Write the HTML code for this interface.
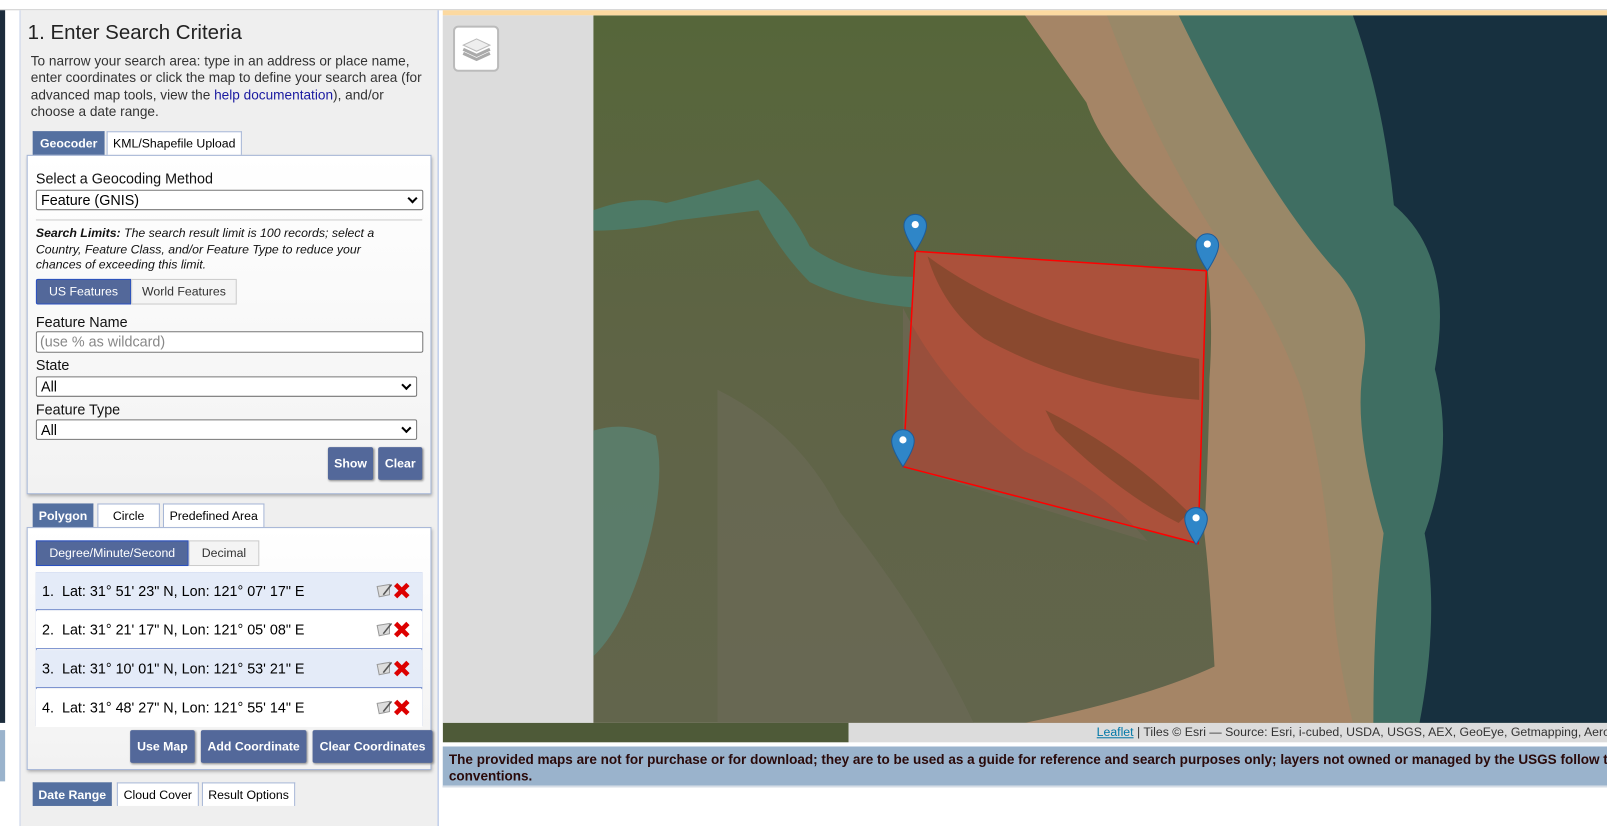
<!DOCTYPE html>
<html><head><meta charset="utf-8"><style>
*{box-sizing:border-box;margin:0;padding:0}
body{width:1607px;height:806px;overflow:hidden;background:#fff;font-family:"Liberation Sans",Arial,sans-serif;position:relative}
#w{position:absolute;left:0;top:0;width:1568px;height:786px;transform:scale(1.0249,1.0254);transform-origin:0 0}
.a{position:absolute}
.tab{position:absolute;height:23px;border:1px solid #a6b6d6;border-bottom:none;background:#fff;font-size:12px;text-align:center;line-height:22px;color:#000}
.tab.on{background:#5470a0;color:#fff;font-weight:bold;border-color:#5470a0}
.btn{position:absolute;background:#53689a;color:#fff;font-weight:bold;font-size:12px;text-align:center;border-radius:2px;box-shadow:1px 1px 2px #888;line-height:32px;height:32px}
.lbl{position:absolute;font-size:14px;color:#111}
.sel{position:absolute;height:20px;border:1px solid #777;background:#fff;border-radius:2px;font-size:14px;line-height:18px;padding-left:4px}
.sel:after{content:"";position:absolute;right:6px;top:4px;width:5px;height:5px;border-right:2px solid #000;border-bottom:2px solid #000;transform:rotate(45deg)}
.row{position:absolute;left:35px;width:377px;height:37px;border-bottom:1px solid #7b93cf;font-size:14px;line-height:36px;padding-left:6px}
.ic{position:absolute;right:8px;top:8px;width:38px;height:20px}
</style></head><body><div id="w">
<div class="a" style="left:0;top:9px;width:1568px;height:1px;background:#ccc"></div>
<div class="a" style="left:0;top:10px;width:5px;height:695px;background:#1c2c3c"></div>
<div class="a" style="left:0;top:712px;width:5px;height:50px;background:#9ab3cc"></div>
<div class="a" style="left:19px;top:10px;width:409px;height:796px;background:#efefef;border-left:1px solid #c7d2ea;border-right:1px solid #a9bce4"></div>
<div class="a" style="left:27px;top:21px;font-size:20px;color:#222">1. Enter Search Criteria</div>
<div class="a" style="left:30px;top:52px;width:392px;font-size:13.3px;line-height:16.3px;color:#333">To narrow your search area: type in an address or place name, enter coordinates or click the map to define your search area (for advanced map tools, view the <span style="color:#1a1aa0">help documentation</span>), and/or<br>choose a date range.</div>
<div class="tab on" style="left:32px;top:128px;width:70px">Geocoder</div>
<div class="tab" style="left:104px;top:128px;width:132px">KML/Shapefile Upload</div>
<div class="a" style="left:26px;top:151px;width:395px;height:331px;border:1px solid #a6b6d6;box-shadow:1px 2px 3px #aaa;background:linear-gradient(#fff,#f2f2f2)"></div>
<div class="lbl" style="left:35px;top:166px">Select a Geocoding Method</div>
<div class="sel" style="left:35px;top:185px;width:378px">Feature (GNIS)</div>
<div class="a" style="left:35px;top:214px;width:377px;height:1px;background:#ccc"></div>
<div class="a" style="left:35px;top:220px;width:370px;font-size:12px;line-height:15.5px;font-style:italic;color:#111"><b>Search Limits:</b> The search result limit is 100 records; select a<br>Country, Feature Class, and/or Feature Type to reduce your<br>chances of exceeding this limit.</div>
<div class="a" style="left:35px;top:272px;width:93px;height:25px;background:#53689a;border:1px solid #2a50c0;color:#fff;font-size:12px;text-align:center;line-height:23px;border-radius:2px 0 0 2px">US Features</div>
<div class="a" style="left:128px;top:272px;width:103px;height:25px;background:#f4f4f4;border:1px solid #ccc;color:#333;font-size:12px;text-align:center;line-height:23px">World Features</div>
<div class="lbl" style="left:35px;top:306px">Feature Name</div>
<div class="a" style="left:35px;top:323px;width:378px;height:21px;border:1px solid #777;background:#fff;border-radius:2px;font-size:14px;color:#888;padding-left:3px;line-height:19px">(use % as wildcard)</div>
<div class="lbl" style="left:35px;top:348px">State</div>
<div class="sel" style="left:35px;top:367px;width:372px">All</div>
<div class="lbl" style="left:35px;top:391px">Feature Type</div>
<div class="sel" style="left:35px;top:409px;width:372px">All</div>
<div class="btn" style="left:320px;top:436px;width:44px">Show</div>
<div class="btn" style="left:369px;top:436px;width:43px">Clear</div>
<div class="tab on" style="left:32px;top:491px;width:59px">Polygon</div>
<div class="tab" style="left:95px;top:491px;width:61px">Circle</div>
<div class="tab" style="left:159px;top:491px;width:99px">Predefined Area</div>
<div class="a" style="left:26px;top:514px;width:395px;height:237px;border:1px solid #a6b6d6;box-shadow:1px 2px 3px #aaa;background:linear-gradient(#fff,#f2f2f2)"></div>
<div class="a" style="left:35px;top:527px;width:149px;height:25px;background:#53689a;border:1px solid #2a50c0;color:#fff;font-size:12px;text-align:center;line-height:23px">Degree/Minute/Second</div>
<div class="a" style="left:184px;top:527px;width:69px;height:25px;background:#f4f4f4;border:1px solid #ccc;color:#333;font-size:12px;text-align:center;line-height:23px">Decimal</div>
<div class="a" style="left:35px;top:558px;width:377px;height:150px;border:1px solid #7b93cf"></div>
<div class="row" style="top:558px;background:#e4ebf8">1.&nbsp; Lat: 31° 51' 23" N, Lon: 121° 07' 17" E<svg class="ic"><path d="M2 6 L14 4 L14 14 L4 16Z" fill="#ddd" stroke="#999"/><path d="M8 14 L16 4" stroke="#555" stroke-width="1.5"/><path d="M20 4 L32 16 M32 4 L20 16" stroke="#d00" stroke-width="4.5"/></svg></div>
<div class="row" style="top:596px;background:#fff">2.&nbsp; Lat: 31° 21' 17" N, Lon: 121° 05' 08" E<svg class="ic"><path d="M2 6 L14 4 L14 14 L4 16Z" fill="#ddd" stroke="#999"/><path d="M8 14 L16 4" stroke="#555" stroke-width="1.5"/><path d="M20 4 L32 16 M32 4 L20 16" stroke="#d00" stroke-width="4.5"/></svg></div>
<div class="row" style="top:634px;background:#e4ebf8">3.&nbsp; Lat: 31° 10' 01" N, Lon: 121° 53' 21" E<svg class="ic"><path d="M2 6 L14 4 L14 14 L4 16Z" fill="#ddd" stroke="#999"/><path d="M8 14 L16 4" stroke="#555" stroke-width="1.5"/><path d="M20 4 L32 16 M32 4 L20 16" stroke="#d00" stroke-width="4.5"/></svg></div>
<div class="row" style="top:672px;background:#fff;border-bottom:none">4.&nbsp; Lat: 31° 48' 27" N, Lon: 121° 55' 14" E<svg class="ic"><path d="M2 6 L14 4 L14 14 L4 16Z" fill="#ddd" stroke="#999"/><path d="M8 14 L16 4" stroke="#555" stroke-width="1.5"/><path d="M20 4 L32 16 M32 4 L20 16" stroke="#d00" stroke-width="4.5"/></svg></div>
<div class="btn" style="left:127px;top:712px;width:63px">Use Map</div>
<div class="btn" style="left:196px;top:712px;width:103px">Add Coordinate</div>
<div class="btn" style="left:305px;top:712px;width:117px">Clear Coordinates</div>
<div class="tab on" style="left:32px;top:763px;width:77px">Date Range</div>
<div class="tab" style="left:114px;top:763px;width:80px">Cloud Cover</div>
<div class="tab" style="left:197px;top:763px;width:91px">Result Options</div>

<div class="a" style="left:432px;top:10px;width:1136px;height:5px;background:#fcd9a0"></div>
<div class="a" style="left:432px;top:15px;width:147px;height:690px;background:#dcdcdc"></div>
<svg class="a" style="left:432px;top:15px" width="1136" height="709" viewBox="432 15 1136 709">
<defs>
<linearGradient id="land" x1="0" x2="0" y1="0" y2="1"><stop offset="0" stop-color="#56663a"/><stop offset=".5" stop-color="#5f6446"/><stop offset="1" stop-color="#62654c"/></linearGradient>
</defs>
<rect x="579" y="15" width="989" height="690" fill="url(#land)"/>
<rect x="432" y="705" width="396" height="19" fill="#4e5a38"/>
<path d="M700 380 Q780 420 820 500 Q900 600 950 705 L700 705Z" fill="#6c6a58" opacity=".6"/>
<path d="M1000 15 L1568 15 L1568 705 L1000 705 Q1120 680 1185 650 Q1180 560 1175 520 Q1180 420 1180 370 Q1185 300 1175 240 Q1080 160 1060 100 Z" fill="#a58566"/>
<path d="M1080 15 L1568 15 L1568 705 L1320 705 Q1300 620 1300 560 Q1290 450 1270 380 Q1240 300 1200 250 Q1130 150 1080 15Z" fill="#8f8a6a" opacity=".55"/>
<path d="M1150 15 L1568 15 L1568 705 L1340 705 Q1340 600 1350 520 Q1320 420 1330 360 Q1340 300 1300 260 Q1230 180 1150 15Z" fill="#3f6e62"/>
<path d="M1320 15 L1568 15 L1568 705 L1385 705 Q1405 600 1390 520 Q1420 440 1400 360 Q1420 250 1360 200 Q1350 100 1320 15Z" fill="#17303f"/>
<path d="M579 205 Q620 190 650 198 Q700 185 740 175 Q770 200 790 240 Q830 270 893 270 L893 300 Q830 295 790 275 Q760 245 740 205 Q700 210 660 215 Q620 225 579 225Z" fill="#4d7a66"/>
<path d="M579 420 Q610 410 640 425 Q650 470 630 540 Q610 610 579 640Z" fill="#5a8070" opacity=".85"/>
<path d="M893 245 L1177 264 L1169 530 L881 455Z" fill="#8f6a4e"/>
<path d="M905 250 Q1000 320 1170 350 L1170 390 Q1050 380 960 330 Q920 300 905 250Z" fill="#4c5a36"/>
<path d="M1020 400 Q1100 440 1160 500 L1150 510 Q1090 480 1030 420Z" fill="#4c5a36"/>
<path d="M881 300 Q920 380 1000 440 Q1080 480 1120 528 L881 455Z" fill="#6a6650"/>
<path d="M893 245 L1177 264 L1169 530 L881 455Z" fill="#c83828" fill-opacity=".5" stroke="#f00" stroke-width="1.5"/>
<g fill="#2f86c8" stroke="#1c5c9a" stroke-width="1">
<path d="M893 245 C882 228 882 222 882 220 A11 11 0 0 1 904 220 C904 222 904 228 893 245Z"/>
<path d="M1178 264 C1167 247 1167 241 1167 239 A11 11 0 0 1 1189 239 C1189 241 1189 247 1178 264Z"/>
<path d="M881 455 C870 438 870 432 870 430 A11 11 0 0 1 892 430 C892 432 892 438 881 455Z"/>
<path d="M1167 531 C1156 514 1156 508 1156 506 A11 11 0 0 1 1178 506 C1178 508 1178 514 1167 531Z"/>
</g>
<g fill="#fff"><circle cx="893" cy="219" r="3.5"/><circle cx="1178" cy="238" r="3.5"/><circle cx="881" cy="429" r="3.5"/><circle cx="1167" cy="505" r="3.5"/></g>
<rect x="828" y="705" width="740" height="19" fill="#dcdcdc"/>
</svg>
<div class="a" style="left:442px;top:25px;width:45px;height:45px;background:#fff;border:2px solid #bbb;border-radius:5px"></div>
<svg class="a" style="left:450px;top:34px" width="30" height="28"><path d="M15 16 L28 10 L15 4 L2 10Z" fill="#eee" stroke="#bbb"/><path d="M2 14 L15 20 L28 14" fill="none" stroke="#aaa" stroke-width="3"/><path d="M2 18 L15 24 L28 18" fill="none" stroke="#aaa" stroke-width="3"/></svg>
<div class="a" style="left:1070px;top:707px;font-size:12px;color:#333;white-space:nowrap;width:498px;overflow:hidden"><span style="color:#0078a8;text-decoration:underline">Leaflet</span> | Tiles © Esri — Source: Esri, i-cubed, USDA, USGS, AEX, GeoEye, Getmapping, Aerogrid</div>
<div class="a" style="left:432px;top:728px;width:1136px;height:40px;background:#9ab3cc;border-bottom:2px solid #d6dde6;font-size:13.2px;font-weight:bold;color:#2a0a0a;padding:5px 0 0 6px;line-height:16px;white-space:nowrap;overflow:hidden">The provided maps are not for purchase or for download; they are to be used as a guide for reference and search purposes only; layers not owned or managed by the USGS follow their own<br>conventions.</div>
</div></body></html>
